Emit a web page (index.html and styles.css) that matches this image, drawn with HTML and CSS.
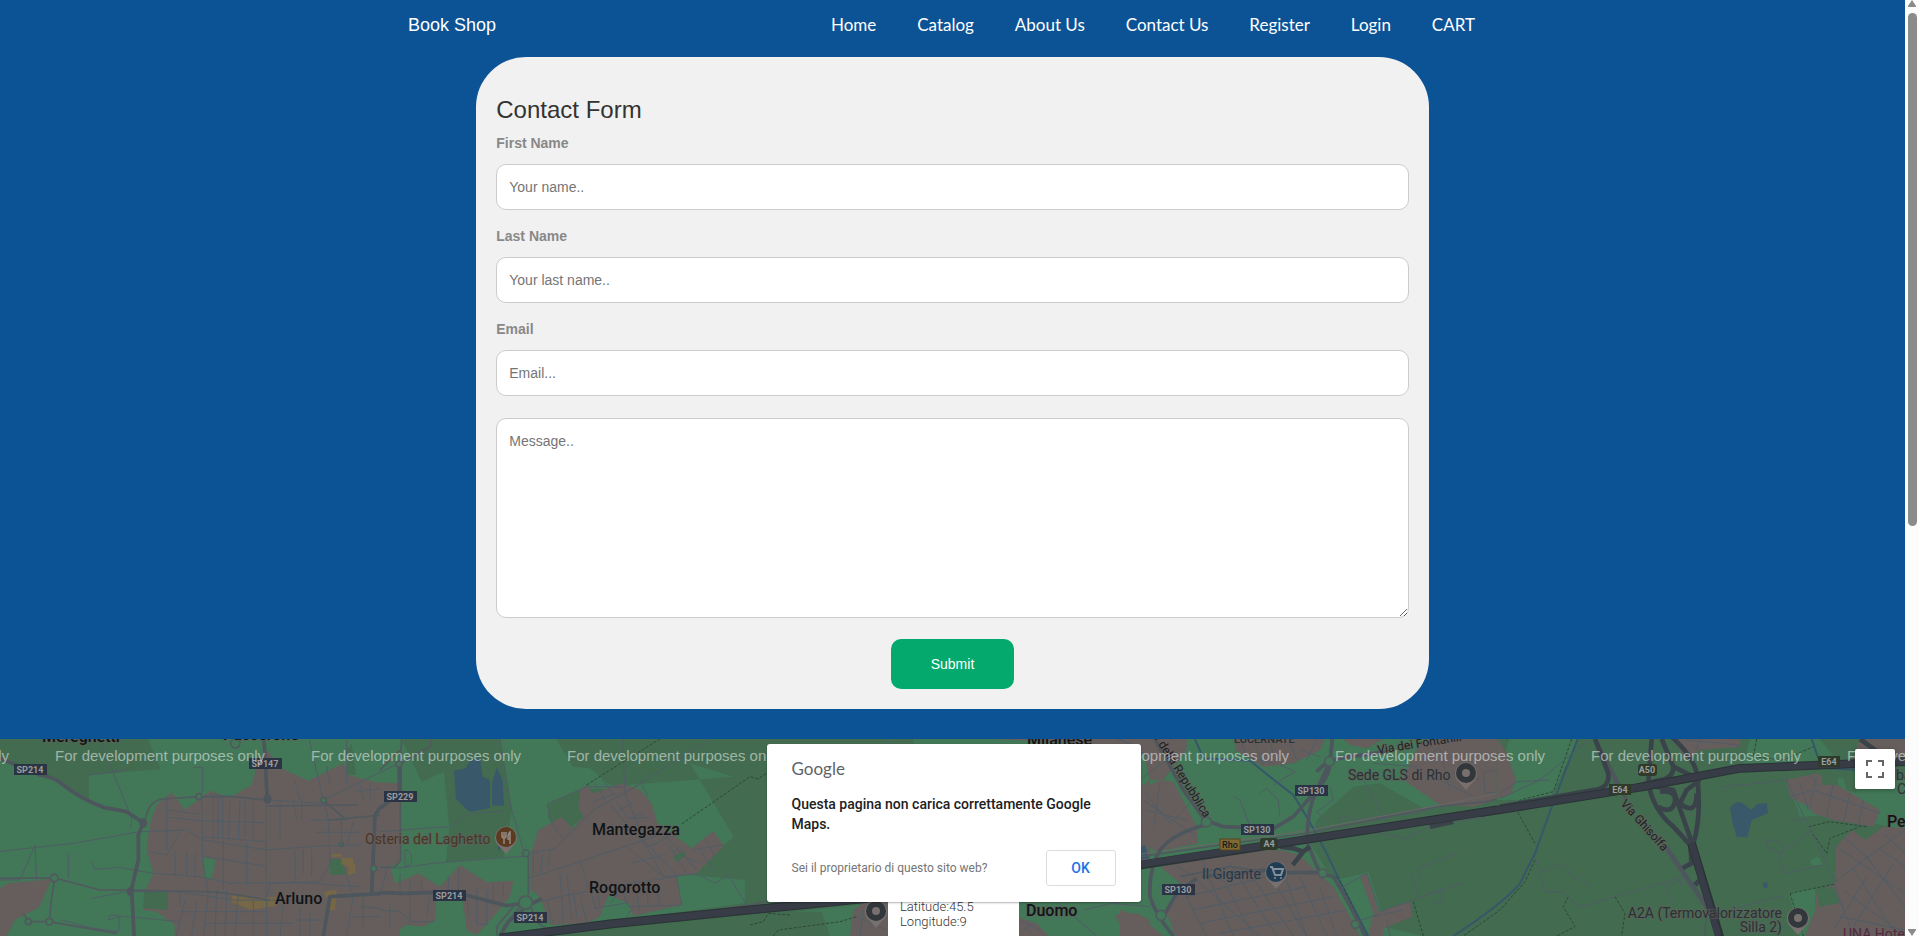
FILE: index.html
```html
<!DOCTYPE html>
<html lang="en">
<head>
<meta charset="utf-8">
<title>Book Shop - Contact Us</title>
<link rel="stylesheet" href="styles.css">
</head>
<body>
<div class="page">
  <header class="navbar">
    <a class="brand" href="#">Book Shop</a>
    <nav class="nav">
      <a href="#">Home</a>
      <a href="#">Catalog</a>
      <a href="#">About Us</a>
      <a href="#">Contact Us</a>
      <a href="#">Register</a>
      <a href="#">Login</a>
      <a href="#">CART</a>
    </nav>
  </header>

  <main class="card">
    <h3 class="card-title">Contact Form</h3>
    <form class="form">
      <label for="fname">First Name</label>
      <input class="field" type="text" id="fname" placeholder="Your name..">
      <label for="lname">Last Name</label>
      <input class="field" type="text" id="lname" placeholder="Your last name..">
      <label for="email">Email</label>
      <input class="field" type="text" id="email" placeholder="Email...">
      <textarea class="field message" aria-label="Message" placeholder="Message.."></textarea>
      <button class="submit" type="submit">Submit</button>
    </form>
  </main>

  <section class="map">
    <svg class="map-canvas" viewBox="0 9 1905 197" preserveAspectRatio="xMidYMin slice">
      <defs>
        <g id="pin"><path d="M0 17L-7 9A11 11 0 1 1 7 9Z" fill="#77706f"/><circle r="10"/></g>
      </defs>
      <rect class="land" y="0" width="1905" height="220"/>

      <!-- Arluno -->
      <g transform="scale(.33333)">
        <path class="wood" d="M140 20H440L482 117L266 136V206L170 150L0 80V20ZM1040 60L1055 42L1068 135H1042Z"/>
        <path class="town" d="M0 475L25 460L155 447L118 532L45 570L20 618H0ZM460 620L524 618V585L470 545L430 540L437 480L460 430L440 360L450 280L470 225L515 187L555 240L630 182L690 203L755 165L775 90L800 60L850 118L925 152L1030 100L1045 135L1140 160L1200 158V620Z"/>
        <path class="wood" d="M432 484H503V540L430 535ZM990 388H1025L1040 434H990Z"/>
        <path class="land" d="M612 382L648 390L632 450L612 442ZM1155 350L1200 343V450L1185 462Z"/>
        <path class="shop" d="M995 372H1024V381H995ZM1024 384H1059V402L1066 404V428L1045 434V412L1024 402ZM697 494L760 506L830 500V528L750 540L695 515ZM973 485L1010 480L1005 540H985L992 500H975Z"/>
        <path class="street" d="M300 30L395 265L392 296M265 136L380 118M580 112H608V180L597 200M0 364L220 340L420 305L560 300L610 330L800 360L960 348L1080 345M275 395L285 418L355 412L460 430L600 440L690 460L900 458L1080 470M275 505L385 484L540 486L700 510L950 512M185 570L280 595L355 605L360 560L325 570L330 555L540 575M205 370V444M105 345L110 450M105 345L60 450H0M545 300L500 375L450 365M928 30L970 210L985 270L990 400L960 455L810 460L800 500M970 210L1200 98M605 200L608 395L625 490L610 618M630 193L830 212L970 220M798 210V515M500 200V360M525 365V438M560 365V438M585 370V440M540 486V530M508 262L595 272L790 278M500 240L600 252M608 320L795 335M670 332V480M740 340V465M720 210L715 325M690 210L685 325M735 210V320M760 215V325M640 200V325M655 200V325M668 200V325M615 380L795 408M650 480L645 618M680 480L675 618M715 490L705 618M760 512V618M800 515V618M850 512L840 618M885 360V455M910 360V430M935 360V440M880 210L890 270M840 215V325M905 205V270M885 155L900 210M930 270H1020L1070 260M950 307H1080M1025 265V340M1060 275L1040 350M980 110L990 165M1040 30V160M1080 165L1090 210M1110 160V210M1070 185L1190 170M1040 440L1060 500L1040 618M530 618L555 510M575 618L590 515M1080 530L1200 540M900 530V618M930 540V618M890 570H970M1060 560H1200M1090 500V590M1150 495V618M540 545H800M620 580H880"/>
        <path class="road" d="M435 275Q445 210 490 207L597 200H700L790 210M0 445L165 444L300 480H395L650 486L810 510M165 444L155 500L148 575H85L70 550M148 575L350 610M970 212L1040 270M985 270L1200 250M800 228L1075 225"/>
        <path class="main-road" d="M0 85L120 135Q160 140 190 165Q240 205 310 232L380 245L430 278L415 315V390L395 475L402 618M792 27L802 210M970 618L990 500L1200 487M1200 98V190L1150 220L1125 255L1115 490M800 205V220"/>
        <path class="hub" d="M430 265a12 14 0 1 1-1 28a12 14 0 0 1 1-28ZM392 472a11 13 0 1 1-1 26a11 13 0 0 1 1-26ZM803 193a12 14 0 1 1-1 28a12 14 0 0 1 1-28Z"/>
        <g class="ring"><circle cx="163" cy="444" r="11"/><circle cx="148" cy="575" r="10"/><circle cx="85" cy="575" r="9"/><circle cx="597" cy="200" r="9"/><circle cx="706" cy="40" r="14"/><circle cx="971" cy="211" r="8"/><circle cx="1121" cy="415" r="9"/><circle cx="1024" cy="343" r="6"/></g>
      </g>

      <!-- Mantegazza and Rogorotto -->
      <g transform="translate(380) scale(.33333)">
        <path class="wood" d="M60 20H1600V618H380L905 545L1095 520V450L870 430L500 230L395 246L370 380L198 396L208 290L192 125L125 155Z"/>
        <path class="land" d="M525 20H730V180L610 175L502 222L500 245H395L360 20ZM395 246H500L520 300L600 270L735 165L1060 140L930 100L1062 322L1030 345L950 430L905 545L640 575L455 575L450 370Z"/>
        <path class="wood" d="M525 20H990L735 170L690 165L630 115L578 110ZM502 222L575 190L600 265L545 325L505 265Z"/>
        <path class="water" d="M222 122L258 115Q265 85 300 85L308 140L330 150V235L268 245L228 208ZM336 160L350 112L368 150L372 228L336 226ZM352 350L362 345L358 368Z"/>
        <path class="town" d="M0 155L60 165V400L20 410L45 462L115 430L180 470L240 405L320 457L400 452L390 500L340 560L290 615L260 600L248 510L170 480L165 570L130 590L80 585L30 618H0ZM452 370L475 300L545 260L575 290L560 305L590 285L600 180L620 165L640 190L725 160L780 180L815 220L832 280L935 355L1000 303L1032 347L950 430L890 440L905 525L760 558L745 520L685 495L660 560L620 580L510 585L480 500L452 480Z"/>
        <path class="wood" d="M592 225L610 262L575 290L545 262ZM878 382L912 362L918 378L890 395Z"/>
        <path class="street" d="M360 27L395 240L430 360M0 305L205 290L270 250L370 243M50 415L160 400L440 378M445 445L600 395L850 310M455 370L525 355L640 240L775 165M502 222L620 170L735 170M502 222Q510 290 550 322M728 27L735 190L800 350L850 440L950 432M735 190L990 27M780 155L805 200M645 160L680 215M668 148L700 195M690 225L800 350M640 215L710 190M710 215L745 265L790 250M720 240L760 215M745 265L810 262M740 350L850 440M755 400L850 375M800 340L890 435M810 350L865 320M870 350L920 430M850 310L950 420M900 350L880 370M920 385L965 400M960 360L1000 420M980 330L1005 380M935 360L1030 345M600 395L650 540M460 520L540 500L750 460L890 440L905 525M540 430L550 580M560 430L575 570M580 480L590 560M500 510L520 580M600 500L620 575M650 470L660 530M720 465L745 530L905 525M760 530L740 560M640 535L745 518M770 480L780 545M800 475L805 530M830 470L840 525M740 460L690 520M460 360V430M490 370L480 430M510 360L505 410M950 432L1005 460L1045 435L1100 525M0 500L20 420M60 430V500M90 450V490M125 450V490M205 440V500M235 415V510M260 490L265 560M290 470V580L320 585V480M340 460V520M370 460V500M0 540L60 545L95 575H165M90 500V580M150 490L140 560M30 520V600M75 360Q95 355 95 400L75 410Z"/>
        <path class="road" d="M60 105L65 27M60 60L0 120M152 27L150 50L60 102M445 380V495M60 110L62 390L45 412H0M455 535Q470 600 520 595L640 590L1110 525L1200 505M420 530L370 590L365 618M400 530L350 590L352 618"/>
        <path class="main-road" d="M0 488L80 490L220 485L380 527L430 520M58 110V190L0 235M458 520L485 505M430 540L385 575L360 618"/>
        <path class="path" d="M620 165L690 120L840 27M905 282L1110 140L1135 147L1165 125L1250 140L1310 60"/>
        <g class="ring"><circle cx="437" cy="518" r="20"/><circle cx="438" cy="370" r="10"/><circle cx="57" cy="102" r="9"/></g>
      </g>

      <!-- Centre -->
      <g transform="translate(750) scale(.33333)">
        <path class="land" d="M0 560L410 515V618H0ZM800 515H1200V618H800Z"/>
        <path class="wood" d="M0 545H215L240 618H0Z"/>
        <path class="town" d="M585 20H1200V80L1100 45ZM310 540L345 515H420V618H300ZM800 560L860 580L895 618H800ZM1095 555L1160 550L1200 570V618H1130ZM1170 170L1200 150V400L1170 390Z"/>
        <path class="street" d="M410 27L420 50M1100 27L1200 60M920 515L1040 618M1080 520L1200 530M1000 540L1110 515M320 560L410 600M340 540L330 618M360 590L410 550M810 570L870 600M820 600L850 580"/>
        <path class="path" d="M0 585L40 575L55 550L120 555M70 618L85 600L270 575L320 560"/>
      </g>

      <!-- Rho -->
      <g transform="translate(1120) scale(.33333)">
        <path class="wood" d="M590 270L700 170L780 160L920 240L1200 180V618H910L790 590L740 430L640 450L570 340Z"/>
        <path class="land" d="M690 440L745 425L785 545L760 600L740 618L690 540Z"/>
        <path class="town" d="M60 27H200V60L130 150L90 150ZM60 180L120 150L160 155L200 230L230 290L235 340L110 365L75 340ZM345 27H615L600 60L520 100L430 110L380 80L345 60ZM670 27H790L740 55L690 45ZM870 100L900 40L1000 20H1200V190L1060 230L960 225L850 150ZM120 410L180 400L260 370L480 360L540 375L600 435L640 470L690 560L720 618H165L145 560L130 560L160 500L180 460ZM0 540L60 560L130 618H0ZM720 440L740 430L775 545L870 515L878 560L790 595V618H745L760 550Z"/>
        <path class="water" d="M60 350L75 345L88 385L60 390Z"/>
        <path class="river" d="M225 27L250 85L390 92L450 140L520 195L560 260L620 370L665 465L745 618"/>
        <path class="path" d="M880 515L910 618M650 440L670 470L740 618"/>
        <path class="street" d="M0 27L120 100M60 150L180 60M75 190L150 280L210 220M75 240L200 270M70 210L230 320M120 160L100 300M240 375L340 618M180 460L260 618M230 450L420 618M300 430L400 618M330 400L470 618M390 430L520 618M440 420L560 618M200 500L480 430M215 540L560 470M240 580L640 500M300 610L680 540M480 400L560 618M540 440L620 618M600 470L650 618M160 400L220 440M420 190L440 175L475 210L480 260M340 200L360 210L390 290M480 105L525 125L460 165M360 27L380 80L460 100M400 27L430 105M450 27L460 80M510 40L530 90M540 60L600 80M590 27L560 90M630 170L640 210L590 245L630 280M720 130L800 280M655 280L670 255L700 270L890 250L950 230M720 300L860 325L940 285L1100 262M910 90L960 50M1090 125L1160 118L1175 180L1095 190ZM960 60L990 180M1000 130L1080 150M940 140L1060 200M660 475L740 430L780 545L880 510L1035 455M890 415L1015 370M870 435L900 500M890 415L900 450M925 490L960 480L970 510L940 520M760 560L850 540M800 570L810 618M700 580L780 550M760 100L890 110"/>
        <path class="road" d="M60 380L300 345L560 310L780 265L950 230L1100 215L1200 190M180 440L330 410L430 425M500 425L610 430"/>
        <path class="rail" d="M60 380L560 310L950 235L1200 185"/>
        <path class="main-road" d="M105 27L190 180L255 270L310 290L460 296L520 260L590 180L630 95L637 27M590 125Q620 95 630 95Q630 130 600 170Q560 220 562 340L600 430L640 440Q700 540 735 618M255 285Q160 310 120 360Q85 420 90 500Q105 550 160 618M130 560L170 490L230 445M630 95L655 85L800 65M500 428L610 428M440 420L245 440"/>
        <path class="ramp" d="M480 350L520 355L550 365L518 405M550 365L570 350M930 290L1000 275"/>
        <path class="highway-edge" d="M0 415L1205 228"/><path class="highway" d="M0 413L1205 229"/>
        <g class="ring"><circle cx="628" cy="94" r="14"/><circle cx="259" cy="276" r="15"/><circle cx="608" cy="430" r="13"/><circle cx="123" cy="556" r="15"/><circle cx="706" cy="583" r="12"/></g>
      </g>

      <!-- Motorway junction -->
      <g transform="translate(1500) scale(.33333)">
        <path class="wood" d="M-10 20H1220V618H-10Z"/>
        <path class="land" d="M30 20H235L150 210H-10V150ZM750 27H960L1010 90L860 120L730 105ZM900 260L1000 255L1215 300V150L1100 140L860 150ZM865 485L945 475L950 618H900ZM930 390L955 380L970 405H935Z"/>
        <path class="town" d="M-10 20L20 70L48 150L30 195L-10 205ZM510 20H720L722 50L600 60L560 90ZM1080 20H1220V90H1060ZM860 150L950 130L1140 240L1120 290L1000 270L940 250L925 230L870 200ZM1008 350L1055 300L1095 330L1150 290L1215 295V618H915L950 530L945 490L1005 460Z"/>
        <path class="wood" d="M948 480L1000 470L1020 518L960 530ZM965 140L1010 133L1015 165H968ZM1025 130L1060 125L1070 190L1040 180Z"/>
        <path class="water" d="M690 235Q705 210 725 218L755 240L770 222L800 220L804 250L755 270L742 322L710 320L698 280ZM789 460L802 455V475H790Z"/>
        <path class="river" d="M233 27L157 225L105 370L60 460Q10 520 -140 618M985 115L1070 120M935 27L955 85"/>
        <path class="path" d="M215 27L160 185L60 210L55 250L105 340M205 500L190 530L225 590L170 618M345 500L375 550L365 618M105 390L75 455L0 540L-110 618M770 27L760 80L850 90L940 50M925 290L990 275L1100 290M930 300L980 370L990 325L1080 290M870 490L1005 462M870 490L910 618"/>
        <path class="street" d="M0 205L120 150L270 27M0 190L50 155L150 150M105 380L135 485H190L235 532L550 440M120 425L195 400L210 435L280 470M490 460L520 520M500 470L540 450L545 475M660 172L860 150L1005 455L1215 300M1000 455L1060 618M690 540L850 497M840 370L930 305M850 430L970 405M840 370L850 430M800 330Q830 325 855 355L840 370L800 350ZM870 275L915 265M870 200L940 180L1140 250M900 160L925 240M950 140L930 230M1000 160L980 260M1050 190L1030 280M1090 210L1075 290M1010 350L1215 490M1030 320L1120 400M1055 410L1180 600M1100 380L1215 530M1130 350L1215 410M1150 310L1215 370M1030 480L1215 618M1020 560L1215 600M1100 440L1000 600M1180 400L1060 590M560 30L720 45M600 27L590 60M850 100L860 150M900 100L960 170"/>
        <path class="road" d="M285 27L350 170M490 350L620 540L615 618M545 410L570 395"/>
        <path class="main-road" d="M285 27L380 210M495 345L625 535"/>
        <path class="ramp" d="M285 27L325 130Q330 175 280 180L0 230M455 27L445 160Q460 240 520 290L575 350M485 27L520 110Q520 145 480 150L320 190M515 20Q590 90 592 145Q605 260 580 340M445 165L520 180L580 350M480 185Q530 180 525 215Q515 255 475 230M540 220Q590 260 590 190M540 220L560 180L600 150M450 170L600 145M570 340L575 400L548 415M585 465L610 440M480 150L600 145M520 110L590 145M1080 27L1160 85"/>
        <path class="highway-edge" d="M-60 248L0 239L430 170L720 115L1215 95M575 340L665 640"/><path class="highway" d="M-62 248L0 239L430 170L720 115L1215 95M575 340L655 618"/>
      </g>

      <!-- Southern motorway -->
      <path class="highway-edge wide" d="M500 208L610 194L770 178L890 166"/>
      <path class="highway wide" d="M500 208L610 194L770 178L890 166"/>

      <g class="shield">
        <rect x="14" y="34" width="33" height="11"/><rect x="249" y="28" width="33" height="11"/><rect x="384" y="61" width="33" height="11"/><rect x="433" y="160" width="33" height="11"/><rect x="514" y="182" width="33" height="11"/><rect x="1295" y="55" width="33" height="11"/><rect x="1241" y="94" width="33" height="11"/><rect x="1162" y="154" width="33" height="11"/>
      </g>
      <g class="shield green"><rect x="1260" y="108" width="18" height="12" rx="3"/><rect x="1638" y="34" width="19" height="12" rx="3"/><rect x="1609" y="54" width="22" height="11"/><rect x="1818" y="26" width="22" height="11"/></g>
      <rect x="1220" y="109" width="20" height="11" fill="#7f6b32" stroke="#54441f"/>
      <g class="shield-text">
        <text x="30" y="43">SP214</text><text x="265" y="37">SP147</text><text x="400" y="70">SP229</text><text x="449" y="169">SP214</text><text x="530" y="191">SP214</text><text x="1311" y="64">SP130</text><text x="1257" y="103">SP130</text><text x="1178" y="163">SP130</text><text x="1269" y="117">A4</text><text x="1647" y="43">A50</text><text x="1620" y="63">E64</text><text x="1829" y="35">E64</text><text x="1230" y="118" class="dark">Rho</text>
      </g>

      <g class="town-name">
        <text x="42" y="12">Mereghetti</text><text x="223" y="10">Passerone</text><text x="275" y="174">Arluno</text><text x="592" y="105">Mantegazza</text><text x="589" y="163">Rogorotto</text><text x="1027" y="15">Milanese</text><text x="1026" y="186">Duomo</text><text x="1887" y="97">Pero</text><text class="district" x="1234" y="13">LUCERNATE</text>
      </g>
      <g class="street-name">
        <text transform="translate(1153 6) rotate(58)">e della Repubblica</text>
        <text transform="translate(1378 24) rotate(-9)">Via dei Fontanili</text>
        <text transform="translate(1620 74) rotate(48)">Via Ghisolfa</text>
      </g>
      <g class="place">
        <text class="food" x="365" y="114">Osteria del Laghetto</text><text x="1348" y="50">Sede GLS di Rho</text><text class="store" x="1202" y="149">Il Gigante</text><text class="end" x="1782" y="188">A2A (Termovalorizzatore</text><text class="end" x="1782" y="202">Silla 2)</text><text class="hotel" x="1843" y="209">UNA Hotel</text><text class="club" x="1896" y="50">bar</text><text class="club" x="1897" y="64">C</text>
      </g>
      <use href="#pin" x="506" y="107" fill="#5b3a20"/>
      <path d="M502 102v4q0 2 2 2v6M504 102v5M506 102v4q0 2-2 2M510 114v-12q-2 1-2 7h2" fill="none" stroke="#958b82" stroke-width="1.5"/>
      <use href="#pin" x="1466" y="43" fill="#31373b"/><circle cx="1466" cy="43" r="4" fill="#77706f"/>
      <use href="#pin" x="1276" y="142" fill="#213d54"/>
      <path d="M1270 137h2l3 8h6l2-6h-10" fill="none" stroke="#84919b" stroke-width="2"/><circle cx="1275" cy="148" r="1" fill="#84919b"/><circle cx="1281" cy="148" r="1" fill="#84919b"/>
      <use href="#pin" x="1798" y="188" fill="#31373b"/><circle cx="1798" cy="188" r="4" fill="#77706f"/>
      <use href="#pin" x="876" y="181" fill="#31373b"/><circle cx="876" cy="181" r="4" fill="#77706f"/>

      <g class="watermark">
        <text x="-201" y="31">For development purposes only</text><text x="55" y="31">For development purposes only</text><text x="311" y="31">For development purposes only</text><text x="567" y="31">For development purposes only</text><text x="1079" y="31">For development purposes only</text><text x="1335" y="31">For development purposes only</text><text x="1591" y="31">For development purposes only</text><text x="1847" y="31">For development purposes only</text>
      </g>
    </svg>

    <div class="info-window">Latitude:45.5<br>Longitude:9</div>

    <div class="dialog" role="dialog" aria-label="Google Maps">
      <div class="dialog-logo">Google</div>
      <p class="dialog-text">Questa pagina non carica correttamente Google Maps.</p>
      <div class="dialog-footer">
        <a href="#">Sei il proprietario di questo sito web?</a>
        <button class="ok" type="button">OK</button>
      </div>
    </div>

    <button class="fullscreen" type="button" aria-label="Toggle fullscreen">
      <svg width="18" height="18" viewBox="0 0 18 18"><path d="M1 6V1h5M12 1h5v5M17 12v5h-5M6 17H1v-5" fill="none" stroke="#666" stroke-width="2"/></svg>
    </button>
  </section>
</div>

<div class="scrollbar" aria-hidden="true">
  <svg width="10" height="7" viewBox="0 0 10 7"><path d="M5 0L9 6V7H1V6Z" fill="#8b8b8b"/></svg>
  <div class="track"><div class="thumb"></div></div>
  <svg width="10" height="7" viewBox="0 0 10 7"><path d="M5 7L9 1V0H1V1Z" fill="#8b8b8b"/></svg>
</div>
</body>
</html>
```
FILE: styles.css
```css
* { box-sizing: border-box; }

body {
  margin: 0;
  height: 100vh;
  display: flex;
  overflow: hidden;
  background: #0c5396;
  font: 14px/20px "Liberation Sans", Arial, sans-serif;
  color: #333;
}

a { text-decoration: none; color: inherit; }

.page { flex: 1; min-width: 0; display: flex; flex-direction: column; }

.navbar {
  display: flex;
  justify-content: space-between;
  width: 1089px;
  max-width: 100%;
  margin: 0 auto;
  padding: 15px 22px 22px 0;
  color: #fff;
}
.brand { font-size: 18px; }
.nav {
  display: flex;
  justify-content: space-between;
  width: 644px;
  font: 17px/20px Lato, "Open Sans", sans-serif;
}

.card {
  width: 50%;
  margin: 0 auto 30px;
  padding: 20px;
  border-radius: 50px;
  background: #f1f1f1;
}
.card-title { margin: 20px 0 10px; font-size: 24px; font-weight: 400; line-height: 26px; }

.form { display: flex; flex-direction: column; }
.form label { margin-bottom: 5px; font-weight: 700; color: #888; align-self: flex-start; }

.field {
  width: 100%;
  height: 46px;
  margin: 6px 0 16px;
  padding: 12px;
  border: 1px solid #ccc;
  border-radius: 10px;
  background: #fff;
  font: inherit;
}
.field::placeholder { color: #757575; }
.message { height: 200px; margin-bottom: 21px; resize: vertical; }

.submit {
  align-self: center;
  padding: 15px 40px;
  border: 0;
  border-radius: 10px;
  background: #04aa6d;
  color: #fff;
  font: inherit;
}

.map { position: relative; flex: 1; min-height: 0; overflow: hidden; font-family: Roboto, sans-serif; }
.map-canvas { display: block; width: 100%; height: 100%; }

.land { fill: #427757; }
.wood { fill: #426b50; }
.town { fill: #655e5d; }
.water { fill: #39596a; }
.shop { fill: #766746; }
.street, .road, .main-road, .rail, .river, .path, .ramp, .highway, .highway-edge { fill: none; stroke-linejoin: round; }
.street { stroke: #505c65; stroke-width: 3; }
.road { stroke: #51595f; stroke-width: 5; }
.main-road { stroke: #4d565c; stroke-width: 11; }
.hub { fill: #4d565c; }
.rail { stroke: #6a6767; stroke-width: 3; transform: translateY(-8px); }
.river { stroke: #34586a; stroke-width: 6; }
.path { stroke: #2e4637; stroke-width: 3; stroke-dasharray: 9 5; }
.ramp { stroke: #3b434a; stroke-width: 14; }
.highway { stroke: #373c46; stroke-width: 20; }
.highway-edge { stroke: #2b3336; stroke-width: 26; }
.highway.wide { stroke-width: 7; }
.highway-edge.wide { stroke-width: 9; }
.ring { fill: #427757; stroke: #51595f; stroke-width: 5; }

.shield { fill: #2a3444; }
.shield.green { fill: #2f3a2a; }
.shield-text { font-size: 9px; font-weight: 700; fill: #9b9c9f; text-anchor: middle; }
.shield-text .dark { font-weight: 500; fill: #191919; }
.town-name { font-size: 16px; font-weight: 500; fill: #111416; }
.town-name .district { font-size: 11px; fill: #2b3033; }
.town-name, .street-name, .place { stroke: #655e5d; stroke-width: 2px; paint-order: stroke; stroke-opacity: .6; }
.street-name { font-size: 12px; fill: #1e2023; }
.place { font-size: 14px; fill: #2b3035; }
.place .food { fill: #4b3525; }
.place .store { fill: #23384a; }
.place .hotel { fill: #54293f; }
.place .club { fill: #203b33; }
.place .end { text-anchor: end; }
.watermark { font: 15px "Liberation Sans", Arial, sans-serif; fill: #fff; fill-opacity: .5; }

.info-window {
  position: absolute;
  top: 140px;
  left: 888px;
  width: 131px;
  height: 70px;
  padding: 20px 12px;
  background: #fff;
  color: #333;
  font-size: 13px;
  font-weight: 300;
  line-height: 15px;
}

.dialog {
  position: absolute;
  top: 5px;
  left: 50%;
  width: 374px;
  margin-left: -186px;
  padding: 15px 25px 16px;
  border-radius: 3px;
  background: #fff;
  box-shadow: 0 1px 2px rgba(0, 0, 0, .3);
}
.dialog-logo { font: 17px/20px Lato, sans-serif; color: #5f6368; }
.dialog-text { margin: 15px 0 16px; color: #212121; font-size: 14px; font-weight: 500; line-height: 20px; }
.dialog-footer { display: flex; align-items: center; justify-content: space-between; color: #757575; font-size: 12px; }
.ok {
  width: 70px;
  height: 36px;
  padding: 0;
  border: 1px solid #dadce0;
  border-radius: 3px;
  background: #fff;
  color: #1a73e8;
  font: 500 14px/20px Roboto, sans-serif;
}
.fullscreen {
  position: absolute;
  top: 10px;
  right: 10px;
  width: 40px;
  height: 40px;
  display: grid;
  place-items: center;
  padding: 0;
  border: 0;
  border-radius: 2px;
  background: #fff;
  box-shadow: 0 1px 4px rgba(0, 0, 0, .3);
}

.scrollbar { width: 14px; display: flex; flex-direction: column; align-items: center; background: #fcfcfc; }
.track { flex: 1; width: 9px; padding-top: 6px; }
.thumb { height: 56%; border-radius: 5px; background: #8b8b8b; }
```
